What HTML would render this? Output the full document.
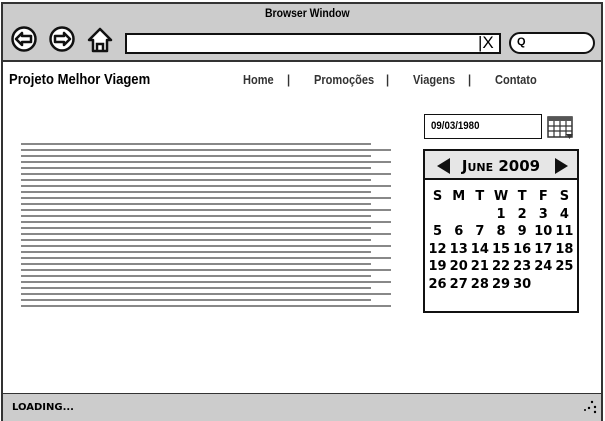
<!DOCTYPE html>
<html><head><style>
*{margin:0;padding:0;box-sizing:border-box}
body{width:605px;height:421px;position:relative;background:#fff;font-family:"Liberation Sans",sans-serif;overflow:hidden}
.a{position:absolute}
.hand{font-family:"Comic Sans MS","DejaVu Sans",sans-serif;font-weight:bold}
.ln{position:absolute;left:21px;height:2px;background:#888}
.cal td{text-align:center;font-size:13px;height:17.5px;width:20px;padding:0}
.nv{position:absolute;top:72px;font-size:13px;font-weight:bold;color:#333;transform:scaleX(0.85);transform-origin:0 0;white-space:nowrap}
</style></head><body>
<div class="a" style="left:1px;top:2px;width:602px;height:419px;border:2px solid #333;border-bottom:none;background:#fff"></div>
<div class="a" style="left:3px;top:4px;width:598px;height:58px;background:#ccc;border-bottom:2px solid #333"></div>
<div class="a" style="left:265px;top:6px;font-size:12px;font-weight:bold;transform:scaleX(0.87);transform-origin:0 0;white-space:nowrap">Browser Window</div>
<svg class="a" style="left:10px;top:26px" width="110" height="30">
<circle cx="14" cy="13" r="11.5" fill="#fff" stroke="#111" stroke-width="2.5"/>
<path d="M6 13 L12 7 V10 H21 V16 H12 V19 Z" fill="none" stroke="#111" stroke-width="2.5" stroke-linejoin="round"/>
<circle cx="52" cy="13" r="11.5" fill="#fff" stroke="#111" stroke-width="2.5"/>
<path d="M60 13 L54 7 V10 H45 V16 H54 V19 Z" fill="none" stroke="#111" stroke-width="2.5" stroke-linejoin="round"/>
<path d="M90 3 L79 14 H83 V25 H97 V14 H101 Z" fill="#fff" stroke="#111" stroke-width="2.5" stroke-linejoin="round"/>
<path d="M87 25 V18 H93 V25" fill="none" stroke="#111" stroke-width="2.5"/>
</svg>
<div class="a" style="left:125px;top:33px;width:376px;height:21px;background:#fff;border:2px solid #111"></div>
<div class="a" style="left:478px;top:33px;font-size:17px;line-height:20px">|X</div>
<div class="a" style="left:509px;top:32px;width:86px;height:22px;background:#fff;border:2.5px solid #111;border-radius:11px"></div>
<div class="a" style="left:517px;top:36px;font-size:11px;font-weight:bold">Q</div>
<div class="a" style="left:9px;top:71px;font-size:15px;font-weight:bold;transform:scaleX(0.87);transform-origin:0 0;white-space:nowrap">Projeto Melhor Viagem</div>
<div class="nv" style="left:243px">Home</div><div class="nv" style="left:287px">|</div>
<div class="nv" style="left:314px">Promoções</div><div class="nv" style="left:386px">|</div>
<div class="nv" style="left:413px">Viagens</div><div class="nv" style="left:468px">|</div>
<div class="nv" style="left:495px">Contato</div>
<div class="ln" style="top:143px;width:350px"></div><div class="ln" style="top:149px;width:370px"></div>
<div class="ln" style="top:155px;width:350px"></div><div class="ln" style="top:161px;width:370px"></div>
<div class="ln" style="top:167px;width:350px"></div><div class="ln" style="top:173px;width:370px"></div>
<div class="ln" style="top:179px;width:350px"></div><div class="ln" style="top:185px;width:370px"></div>
<div class="ln" style="top:191px;width:350px"></div><div class="ln" style="top:197px;width:370px"></div>
<div class="ln" style="top:203px;width:350px"></div><div class="ln" style="top:209px;width:370px"></div>
<div class="ln" style="top:215px;width:350px"></div><div class="ln" style="top:221px;width:370px"></div>
<div class="ln" style="top:227px;width:350px"></div><div class="ln" style="top:233px;width:370px"></div>
<div class="ln" style="top:239px;width:350px"></div><div class="ln" style="top:245px;width:370px"></div>
<div class="ln" style="top:251px;width:350px"></div><div class="ln" style="top:257px;width:370px"></div>
<div class="ln" style="top:263px;width:350px"></div><div class="ln" style="top:269px;width:370px"></div>
<div class="ln" style="top:275px;width:350px"></div><div class="ln" style="top:281px;width:370px"></div>
<div class="ln" style="top:287px;width:350px"></div><div class="ln" style="top:293px;width:370px"></div>
<div class="ln" style="top:299px;width:350px"></div><div class="ln" style="top:305px;width:370px"></div>
<div class="a" style="left:424px;top:114px;width:118px;height:25px;border:1.5px solid #111"></div>
<div class="a" style="left:431px;top:120px;font-size:11px;font-weight:bold;transform:scaleX(0.88);transform-origin:0 0">09/03/1980</div>
<svg class="a" style="left:547px;top:116px" width="28" height="24">
<rect x="1" y="1" width="24" height="20" fill="#fff" stroke="#333" stroke-width="1.5"/>
<rect x="1" y="1" width="24" height="4" fill="#555"/>
<path d="M1 10H25M1 15H25M7 5V21M13 5V21M19 5V21" stroke="#333" stroke-width="1.2"/>
<path d="M19 18 L26 18 L22.5 23Z" fill="#333"/>
</svg>
<div class="a" style="left:423px;top:149px;width:156px;height:164px;border:2px solid #111;background:#fff"></div>
<div class="a" style="left:425px;top:151px;width:152px;height:29px;background:#e6e6e6;border-bottom:2px solid #111"></div>
<svg class="a" style="left:435px;top:156px" width="140" height="20"><path d="M2 10 L15 2 V18Z" fill="#111"/><path d="M133 10 L120 2 V18Z" fill="#111"/></svg>
<div class="a hand" style="left:425px;top:157px;width:152px;text-align:center;font-size:15px;font-variant:small-caps">June 2009</div>
<table class="a cal hand" style="left:427px;top:188px;border-collapse:collapse;width:148px">
<tr><td>S</td><td>M</td><td>T</td><td>W</td><td>T</td><td>F</td><td>S</td></tr>
<tr><td></td><td></td><td></td><td>1</td><td>2</td><td>3</td><td>4</td></tr>
<tr><td>5</td><td>6</td><td>7</td><td>8</td><td>9</td><td>10</td><td>11</td></tr>
<tr><td>12</td><td>13</td><td>14</td><td>15</td><td>16</td><td>17</td><td>18</td></tr>
<tr><td>19</td><td>20</td><td>21</td><td>22</td><td>23</td><td>24</td><td>25</td></tr>
<tr><td>26</td><td>27</td><td>28</td><td>29</td><td>30</td><td></td><td></td></tr>
</table>
<div class="a" style="left:3px;top:393px;width:598px;height:28px;background:#ccc;border-top:1.5px solid #333"></div>
<div class="a hand" style="left:12px;top:402px;font-size:10px">LOADING...</div>
<svg class="a" style="left:583px;top:400px" width="15" height="14"><circle cx="9" cy="2" r="1.2"/><circle cx="12" cy="7" r="1.2"/><circle cx="12" cy="12" r="1.2"/><circle cx="6" cy="8" r="1.2"/><circle cx="2" cy="10" r="1"/></svg>
</body></html>
